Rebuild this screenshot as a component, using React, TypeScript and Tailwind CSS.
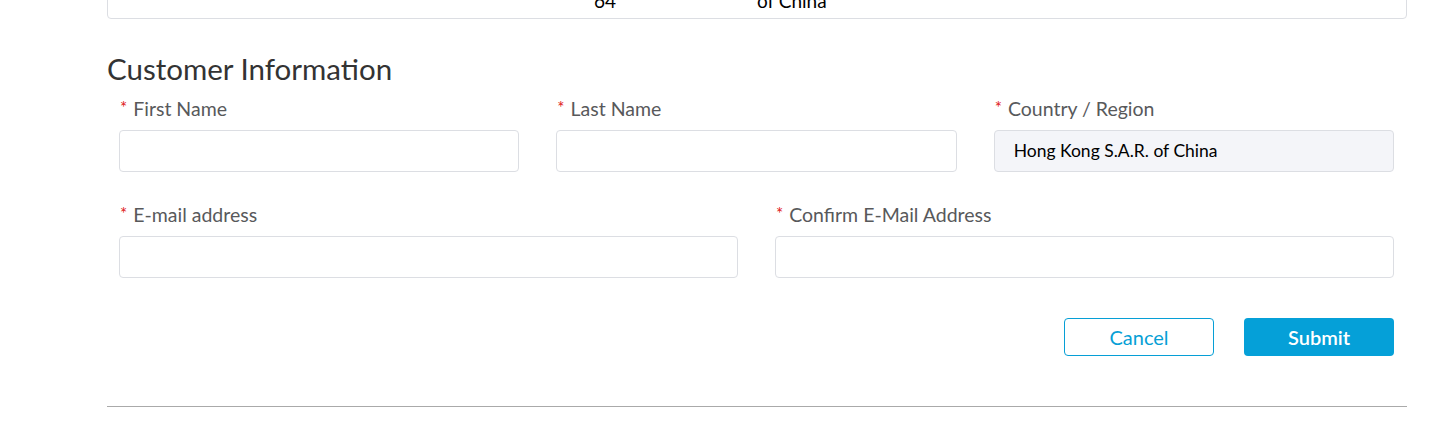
const font = { fontFamily: "Lato, 'Noto Sans', sans-serif" };

function Label({ text }: { text: string }) {
  return (
    <label className="flex items-center h-6 pl-px text-[19.5px] leading-6 text-[#58595b]">
      <span className="text-[17px] leading-none text-[#e02020] mr-[6px] -mt-[4px]">*</span>
      {text}
    </label>
  );
}

function Field({ label, value, disabled }: { label: string; value?: string; disabled?: boolean }) {
  return (
    <div className="flex flex-col">
      <Label text={label} />
      <div
        className={
          "mt-[9px] h-[42px] rounded-[4px] border border-[#dcdee3] flex items-center px-[19px] text-[17.5px] text-black " +
          (disabled ? "bg-[#f4f5f9]" : "bg-white")
        }
      >
        {value}
      </div>
    </div>
  );
}

export default function App() {
  return (
    <div className="h-[435px] overflow-hidden bg-white" style={font}>
      <div className="ml-[107px] w-[1300px]">
        {/* previous table, scrolled out of view */}
        <div className="-mt-[33px] border border-[#dcdee3] rounded-[4px] pb-[6px] text-[19px] leading-[22px] text-black">
          <div className="flex">
            <div className="w-[486px]" />
            <div className="w-[163px]">
              <div>&nbsp;</div>
              <div>64</div>
            </div>
            <div>
              <div>Region</div>
              <div>of China</div>
            </div>
          </div>
        </div>

        <h2 className="mt-[33px] text-[29.5px] leading-[34px] text-[#333333]">Customer Information</h2>

        <div className="pl-3 pr-[13px] mt-[11px]">
          <div className="grid grid-cols-3 gap-x-[37px]">
            <Field label="First Name" />
            <Field label="Last Name" />
            <Field label="Country / Region" value="Hong Kong S.A.R. of China" disabled />
          </div>

          <div className="grid grid-cols-2 gap-x-[37px] mt-[31px]">
            <Field label="E-mail address" />
            <Field label="Confirm E-Mail Address" />
          </div>

          <div className="flex justify-end gap-[30px] mt-[40px]">
            <button className="w-[150px] h-[38px] rounded-[4px] border border-[#069fd6] text-[#069fd6] text-[20px] bg-white">
              Cancel
            </button>
            <button className="w-[150px] h-[38px] rounded-[4px] bg-[#05a0d8] text-white text-[20px] font-semibold">
              Submit
            </button>
          </div>
        </div>

        <div className="mt-[50px] h-px bg-[#aaaaaa]" />
      </div>
    </div>
  );
}
